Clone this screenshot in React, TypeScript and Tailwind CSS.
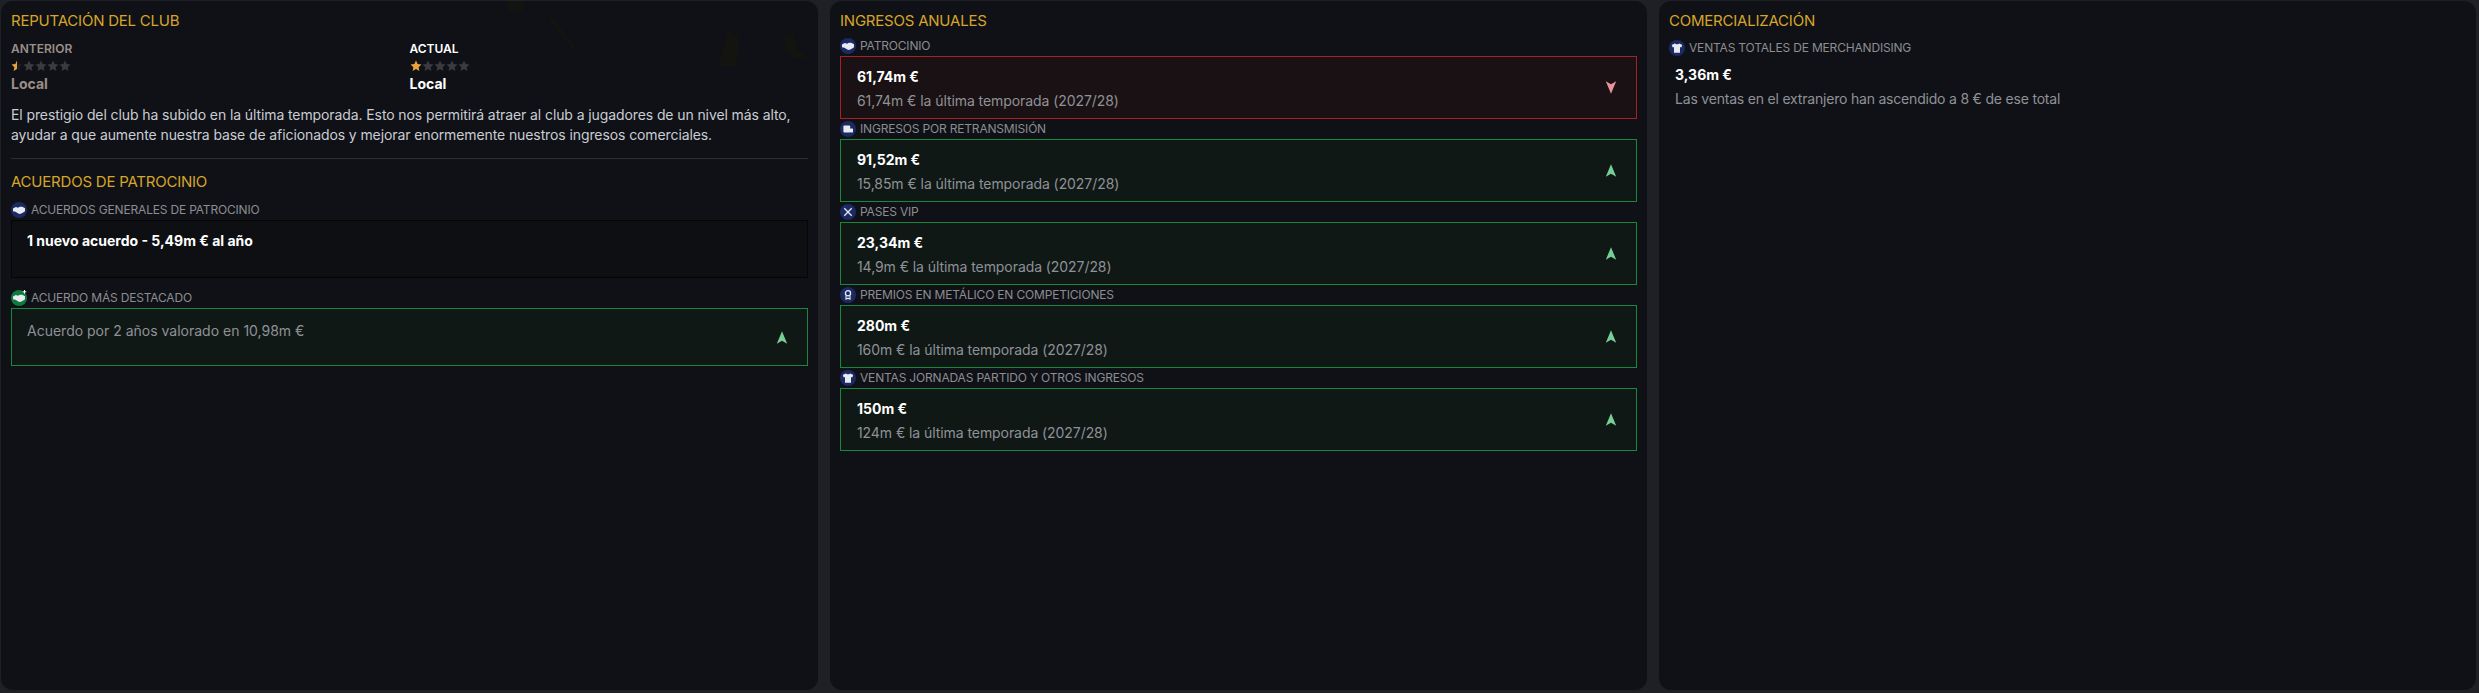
import React from "react";

const Hands = () => (
  <path d="M2 6.4 4.8 5l2.4.7L8.2 5l1.2-.3 1.8.1L14 6.2v3l-2.6 1.7-2.4 1.2-1.2-.3-3.4-2.1L2 9.2z" fill="#e8eaf2" />
);
const Shirt = () => (
  <path d="M5.8 3.4 2.8 5l.9 2.5 1.3-.4v5.6h6V7.1l1.3.4.9-2.5-3-1.6c-.4 1-3.8 1-4.2 0z" fill="#e8eaf2" />
);
const Cam = () => (
  <g fill="#e8eaf2">
    <rect x="3.4" y="4.6" width="6.8" height="6.8" rx="1" />
    <rect x="10" y="7.4" width="3" height="4" rx=".6" />
  </g>
);
const Vip = () => (
  <path d="m4.3 4.3 7.4 7.4m0-7.4-7.4 7.4" stroke="#e8eaf2" strokeWidth="1.3" fill="none" />
);
const Medal = () => (
  <g fill="none" stroke="#e8eaf2">
    <circle cx="8" cy="6.2" r="2.6" strokeWidth="1.3" />
    <path d="M6 9v3.2l2-1 2 1V9" strokeWidth="1.1" />
  </g>
);

function RoundIcon({ children, green, plus }: { children: React.ReactNode; green?: boolean; plus?: boolean }) {
  return (
    <svg width="16" height="16" viewBox="0 0 16 16" className="shrink-0 overflow-visible">
      <circle cx="8" cy="8" r="8" fill={green ? "#0f7a3c" : "#1b2a63"} />
      {children}
      {plus && <path d="M13.5 0v3.6M11.7 1.8h3.6" stroke="#fff" strokeWidth="1" />}
    </svg>
  );
}

function Star({ kind }: { kind: "on" | "half" | "off" }) {
  const d = "M6 .6l1.65 3.5 3.8.5-2.8 2.6.72 3.8L6 9.1 2.63 11l.72-3.8L.55 4.6l3.8-.5z";
  return (
    <svg width="12" height="12" viewBox="0 0 12 12" className="shrink-0">
      <path d={d} fill={kind === "on" ? "#e8a23d" : kind === "half" ? "#1c1d22" : "#3a3b40"} />
      {kind === "half" && <path d="M6 .6v8.5L2.63 11l.72-3.8L.55 4.6l3.8-.5z" fill="#e8a23d" />}
    </svg>
  );
}

function Stars({ first }: { first: "on" | "half" }) {
  return (
    <div className="flex h-3 w-[60px]">
      <Star kind={first} />
      <Star kind="off" />
      <Star kind="off" />
      <Star kind="off" />
      <Star kind="off" />
    </div>
  );
}

function Title({ children }: { children: React.ReactNode }) {
  return <h2 className="h-5 pt-px text-[15px] leading-5 font-normal tracking-[-0.22px] text-[#d6a529]">{children}</h2>;
}

function Label({ icon, children }: { icon: React.ReactNode; children: React.ReactNode }) {
  return (
    <div className="flex h-4 items-center gap-[4px] text-[12px] leading-4 tracking-[-0.18px] text-[#8b8d92]">
      {icon}
      <span>{children}</span>
    </div>
  );
}

function Arrow({ up }: { up: boolean }) {
  return (
    <svg width="12" height="13" viewBox="0 0 12 13" className="shrink-0">
      {up ? (
        <path d="M6 .3l5.2 12.4-5.2-3-5.2 3z" fill="#76cf97" />
      ) : (
        <path d="M6 12.7l5.2-12.4-5.2 3-5.2-3z" fill="#e8939b" />
      )}
    </svg>
  );
}

function Stat({ icon, label, value, sub, bad }: { icon: React.ReactNode; label: string; value: string; sub: string; bad?: boolean }) {
  return (
    <div className="flex flex-col gap-[2px]">
      <Label icon={icon}>{label}</Label>
      <div
        className={`flex h-[63px] items-center justify-between border pr-[19px] pl-[16px] ${
          bad ? "border-[#a82022] bg-[#1a1114]" : "border-[#17873f] bg-[#101816]"
        }`}
      >
        <div className="pt-[3px]">
          <div className="text-[14px] leading-5 font-bold text-white">{value}</div>
          <div className="mt-[4px] text-[14px] leading-5 tracking-[-0.07px] text-[#8f9196]">{sub}</div>
        </div>
        <Arrow up={!bad} />
      </div>
    </div>
  );
}

export default function App() {
  return (
    <div
      className="flex h-[693px] w-[2479px] gap-[12px] bg-[#1f2025] pt-px pr-[3px] pb-[3px] pl-px text-[14px]"
      style={{ fontFamily: "Inter, 'Noto Sans', sans-serif" }}
    >
      <section className="relative flex h-full w-[817px] flex-col rounded-[12px] bg-[#101116] px-[10px] pt-[9px]">
        <svg width="817" height="70" viewBox="0 0 817 70" className="pointer-events-none absolute top-0 left-0">
          <g fill="#131310">
            <path d="M506 0h17l-1 10h-15z" />
            <path d="M549 13l26 33-5 1-21-27z" />
            <path d="M728 27l11 12-4 26h-18z" />
            <path d="M783 34h10l3 14 12 8-14 2-10-10z" />
          </g>
        </svg>
        <div className="relative flex flex-col">
          <Title>REPUTACIÓN DEL CLUB</Title>
          <div className="mt-[11px] grid grid-cols-2">
            <div className="text-[#9a8f88]">
              <div className="text-[12px] leading-4 font-semibold">ANTERIOR</div>
              <div className="mt-[3px]"><Stars first="half" /></div>
              <div className="mt-[2px] text-[14px] leading-5 font-bold">Local</div>
            </div>
            <div className="text-white">
              <div className="text-[12px] leading-4 font-semibold">ACTUAL</div>
              <div className="mt-[3px]"><Stars first="on" /></div>
              <div className="mt-[2px] text-[14px] leading-5 font-bold">Local</div>
            </div>
          </div>
          <p className="mt-[11px] text-[14px] leading-5 tracking-[-0.1px] text-[#c9cdd3]">
            El prestigio del club ha subido en la última temporada. Esto nos permitirá atraer al club a jugadores de un nivel más alto,
            <br />
            ayudar a que aumente nuestra base de aficionados y mejorar enormemente nuestros ingresos comerciales.
          </p>
          <hr className="mt-[13px] border-0 border-t border-[#2c2d32]" />
          <div className="mt-[12px]"><Title>ACUERDOS DE PATROCINIO</Title></div>
          <div className="mt-[11px]">
            <Label icon={<RoundIcon><Hands /></RoundIcon>}>ACUERDOS GENERALES DE PATROCINIO</Label>
          </div>
          <div className="mt-[2px] h-[58px] border border-[#050506] bg-[#0e0f13] pt-[10px] pl-[15px] text-[14px] leading-5 font-bold text-white">
            1 nuevo acuerdo - 5,49m € al año
          </div>
          <div className="mt-[12px]">
            <Label icon={<RoundIcon green plus><Hands /></RoundIcon>}>ACUERDO MÁS DESTACADO</Label>
          </div>
          <div className="mt-[2px] flex h-[58px] items-center justify-between border border-[#17873f] bg-[#101816] pr-[19px] pl-[15px]">
            <span className="-mt-[12px] text-[14px] leading-5 text-[#8f9196]">Acuerdo por 2 años valorado en 10,98m €</span>
            <Arrow up />
          </div>
        </div>
      </section>

      <section className="flex h-full w-[817px] flex-col rounded-[12px] bg-[#101116] px-[10px] pt-[9px]">
        <Title>INGRESOS ANUALES</Title>
        <div className="mt-[8px] flex flex-col gap-[2px]">
          <Stat icon={<RoundIcon><Hands /></RoundIcon>} label="PATROCINIO" value="61,74m €" sub="61,74m € la última temporada (2027/28)" bad />
          <Stat icon={<RoundIcon><Cam /></RoundIcon>} label="INGRESOS POR RETRANSMISIÓN" value="91,52m €" sub="15,85m € la última temporada (2027/28)" />
          <Stat icon={<RoundIcon><Vip /></RoundIcon>} label="PASES VIP" value="23,34m €" sub="14,9m € la última temporada (2027/28)" />
          <Stat icon={<RoundIcon><Medal /></RoundIcon>} label="PREMIOS EN METÁLICO EN COMPETICIONES" value="280m €" sub="160m € la última temporada (2027/28)" />
          <Stat icon={<RoundIcon><Shirt /></RoundIcon>} label="VENTAS JORNADAS PARTIDO Y OTROS INGRESOS" value="150m €" sub="124m € la última temporada (2027/28)" />
        </div>
      </section>

      <section className="flex h-full flex-1 flex-col rounded-[12px] bg-[#101116] px-[10px] pt-[9px]">
        <Title>COMERCIALIZACIÓN</Title>
        <div className="mt-[10px]">
          <Label icon={<RoundIcon><Shirt /></RoundIcon>}>VENTAS TOTALES DE MERCHANDISING</Label>
        </div>
        <div className="mt-[9px] pl-[6px]">
          <div className="text-[14px] leading-5 font-bold text-white">3,36m €</div>
          <div className="mt-[4px] text-[14px] leading-5 tracking-[-0.2px] text-[#8f9196]">Las ventas en el extranjero han ascendido a 8 € de ese total</div>
        </div>
      </section>
    </div>
  );
}
